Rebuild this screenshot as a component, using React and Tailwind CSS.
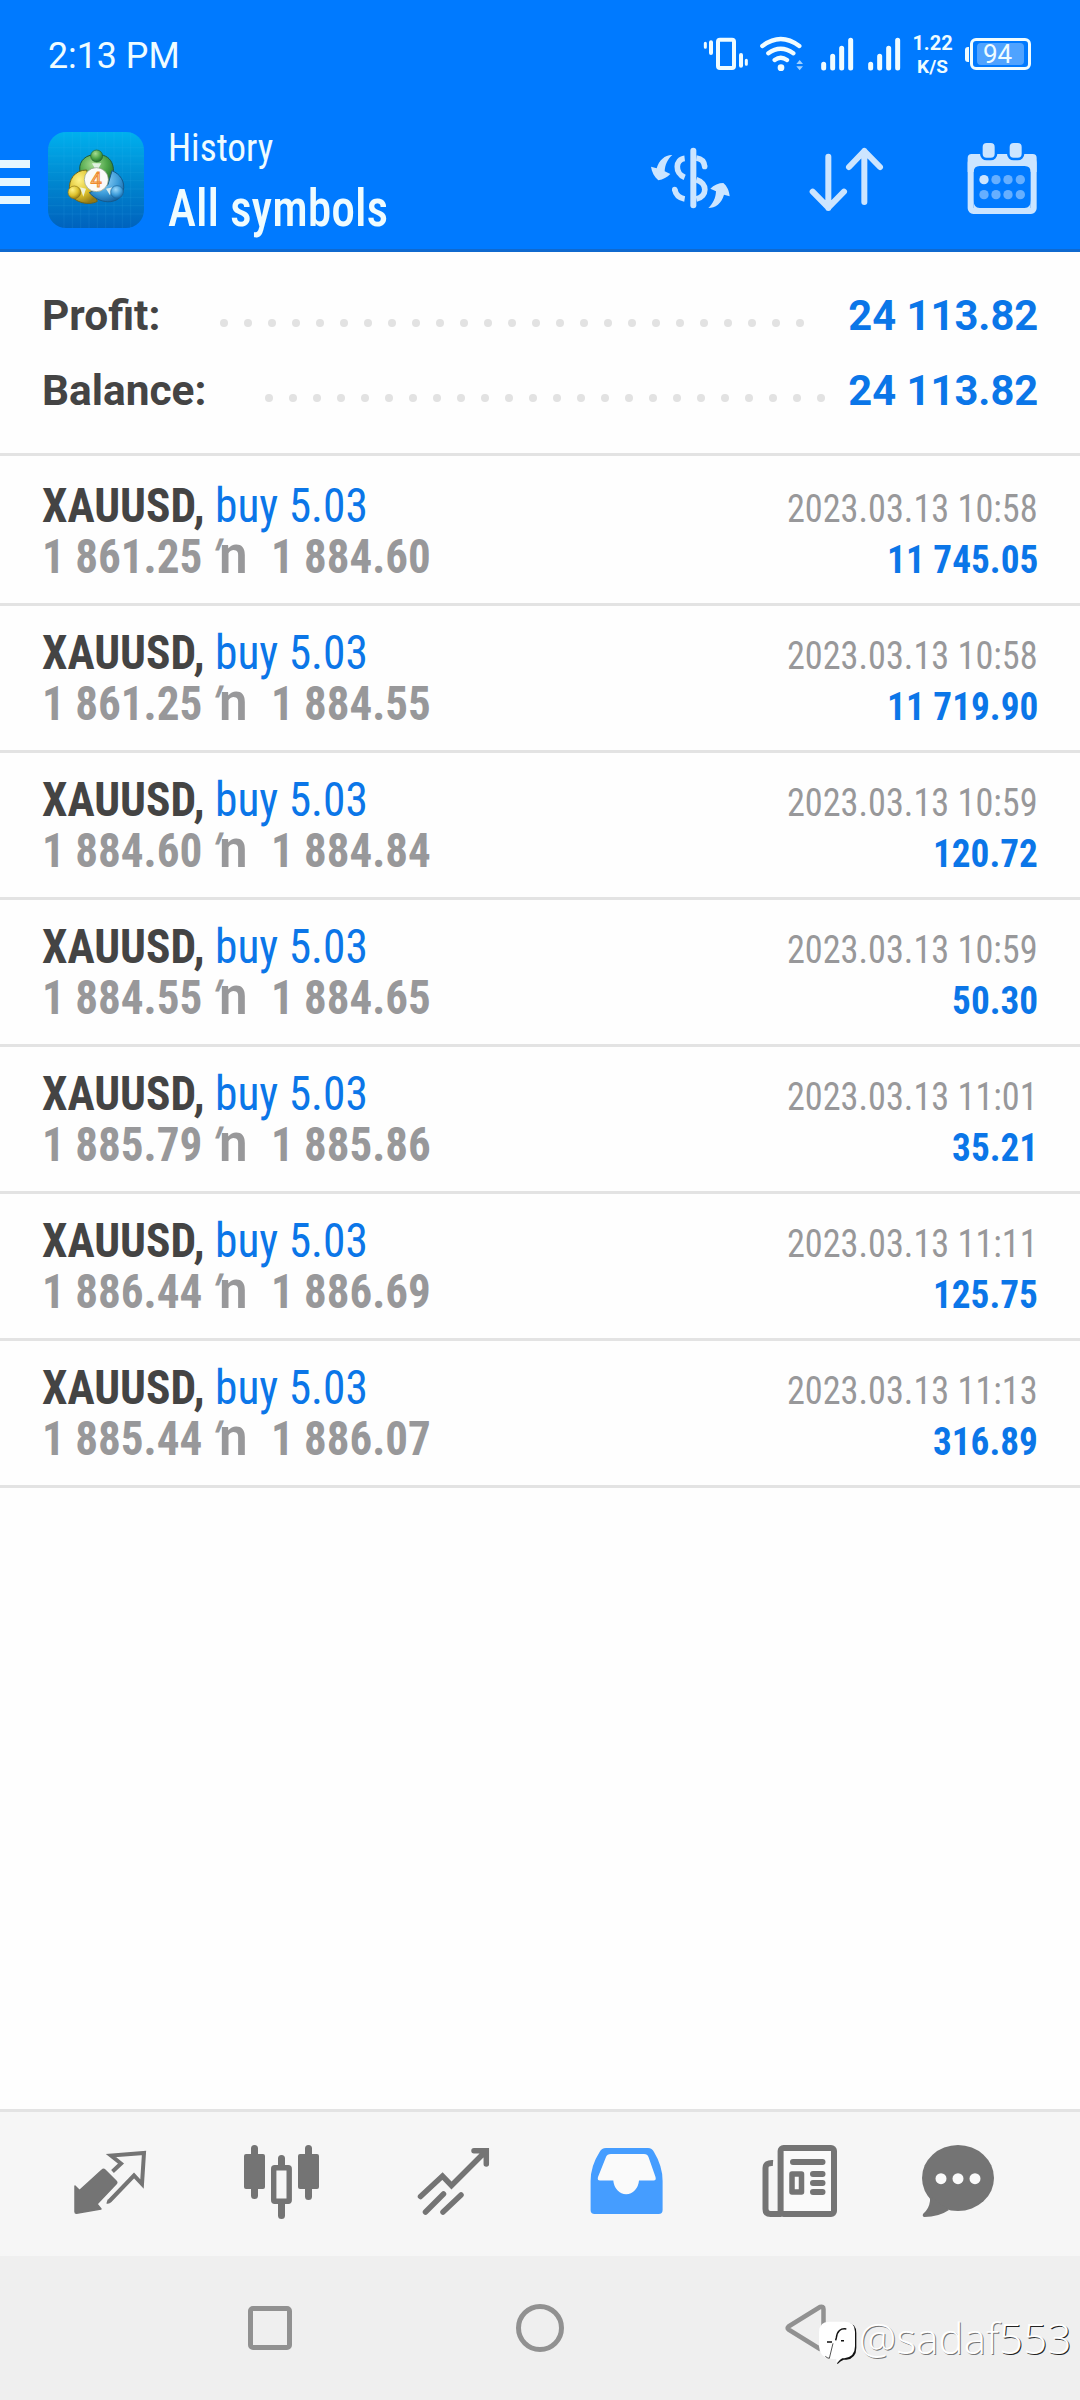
import React from 'react';

const totals = [
    { label: 'Profit:', value: '24 113.82', width: 'w-[178px]', dots: 25 },
    { label: 'Balance:', value: '24 113.82', width: 'w-[223px]', dots: 24 },
];

const deals = [
    { open: '1 861.25', close: '1 884.60', time: '2023.03.13 10:58', profit: '11 745.05' },
    { open: '1 861.25', close: '1 884.55', time: '2023.03.13 10:58', profit: '11 719.90' },
    { open: '1 884.60', close: '1 884.84', time: '2023.03.13 10:59', profit: '120.72' },
    { open: '1 884.55', close: '1 884.65', time: '2023.03.13 10:59', profit: '50.30' },
    { open: '1 885.79', close: '1 885.86', time: '2023.03.13 11:01', profit: '35.21' },
    { open: '1 886.44', close: '1 886.69', time: '2023.03.13 11:11', profit: '125.75' },
    { open: '1 885.44', close: '1 886.07', time: '2023.03.13 11:13', profit: '316.89' },
];

const condensed = "font-['Roboto_Condensed',Roboto,sans-serif] [font-stretch:75%]";

function Signal() {
    return (
        <svg width="34" height="34" viewBox="0 0 102 102" fill="none" stroke="#f0fcff" strokeWidth="15" strokeLinecap="round">
            <path d="M8 82v11M35 58v35M62 34v59M89 10v83" />
        </svg>
    );
}

function StatusBar() {
    return (
        <div className="flex h-[112px] items-center pl-[48px] pr-[49px] text-[#effcff]">
            <span className="origin-left scale-x-[.98] text-[36.5px] leading-none">2:13 PM</span>
            <div className="-mt-1 ml-auto flex items-center">
                {/* vibrate */}
                <svg width="46" height="34" viewBox="249 111 138 102" fill="none" stroke="#f0fcff" strokeLinecap="round">
                    <rect x="294" y="119" width="48" height="85" rx="6" strokeWidth="12" />
                    <path d="M273 127v32M363 165v32" strokeWidth="12" />
                    <path d="M256 130v12M379 181v12" strokeWidth="9" />
                </svg>
                <svg className="ml-[10px]" width="45" height="36" viewBox="419 105 135 108" fill="none" stroke="#f0fcff" strokeWidth="13" strokeLinecap="round">
                    <path d="M429 135Q484 93 540 135M447 157Q484 130 522 157M466 177Q484 164 503 177" />
                    <circle cx="485" cy="200" r="10" fill="#f0fcff" stroke="none" />
                    <path d="M531 189l10-12 10 12zM531 196l10 12 10-12z" fill="#9fd0ff" stroke="none" />
                </svg>
                <div className="ml-[17px] flex gap-[13px]">
                    <Signal />
                    <Signal />
                </div>
                <div className="ml-[10px] mr-px flex w-[41px] flex-col items-center pt-0.5 text-[20px] font-bold leading-[23px]">
                    <span>1.22</span>
                    <span className="text-[19px]">K/S</span>
                </div>
                <div className="ml-[11px] flex items-center">
                    <span className="mr-px h-[15px] w-1 rounded-l-[3px] bg-[#f0fcff]" />
                    <div className="flex h-8 w-[61px] items-center justify-center rounded-md border-[3px] border-[#f0fcff]">
                        <div className="flex h-[22px] w-[47px] items-center justify-center rounded-sm bg-[#4fa3ff] pr-[6px] text-[26px] leading-none">
                            94
                        </div>
                    </div>
                </div>
            </div>
        </div>
    );
}

function Logo() {
    return (
        <svg width="96" height="96" viewBox="24 36 288 288">
            <defs>
                <linearGradient id="tile" x1="0" y1="0" x2="0" y2="1">
                    <stop offset="0" stopColor="#00b0ee" />
                    <stop offset="0.5" stopColor="#0088d0" />
                    <stop offset="1" stopColor="#0062bd" />
                </linearGradient>
                <radialGradient id="green" cx="0.4" cy="0.3" r="0.7">
                    <stop offset="0" stopColor="#a6dc92" />
                    <stop offset="0.6" stopColor="#4da548" />
                    <stop offset="1" stopColor="#256f2d" />
                </radialGradient>
                <radialGradient id="yellow" cx="0.35" cy="0.3" r="0.75">
                    <stop offset="0" stopColor="#fff386" />
                    <stop offset="0.6" stopColor="#dcc02c" />
                    <stop offset="1" stopColor="#927915" />
                </radialGradient>
                <radialGradient id="blue" cx="0.4" cy="0.3" r="0.75">
                    <stop offset="0" stopColor="#9bd8fa" />
                    <stop offset="0.6" stopColor="#3b9bd9" />
                    <stop offset="1" stopColor="#14609f" />
                </radialGradient>
            </defs>
            <rect x="24" y="36" width="288" height="288" rx="54" fill="url(#tile)" />
            <path
                d="M24 83h288M24 108h288M24 132h288M24 157h288M24 182h288M24 207h288M24 232h288M24 257h288M24 282h288M72 36v288M97 36v288M122 36v288M147 36v288M172 36v288M197 36v288M222 36v288M247 36v288M272 36v288"
                stroke="#4fc6f5"
                strokeOpacity="0.16"
                strokeWidth="2"
            />
            <path d="M150 106C122 114 112 142 124 166L208 196C226 168 228 118 190 106Z" fill="url(#green)" stroke="#1c5a40" strokeWidth="3" />
            <path d="M140 150C104 150 84 180 89 212C92 244 142 260 172 244L150 190Z" fill="url(#yellow)" stroke="#6d6418" strokeWidth="3" />
            <path d="M216 152C240 162 256 184 250 212C244 250 186 260 148 218L204 194Z" fill="url(#blue)" stroke="#155a8c" strokeWidth="3" />
            <path d="M156 130h28l-8 14h-12zM120 202l18 4-8 24zM218 202l-20 4 12 20z" fill="#eef8f2" fillOpacity="0.85" />
            <circle cx="170" cy="108" r="18" fill="url(#green)" stroke="#25662f" strokeWidth="2" />
            <circle cx="103" cy="217" r="19" fill="url(#yellow)" stroke="#8c7415" strokeWidth="2" />
            <circle cx="231" cy="216" r="19" fill="url(#blue)" stroke="#1b659c" strokeWidth="2" />
            <circle cx="169" cy="179" r="36" fill="#fbfaf8" stroke="#8b9c88" strokeWidth="2" />
            <text x="168" y="200" textAnchor="middle" fontSize="60" fontFamily="Roboto, sans-serif" fontWeight="400" fill="#ffd9ae" stroke="#ee8a2d" strokeWidth="3">
                4
            </text>
        </svg>
    );
}

function Header() {
    return (
        <header className="h-[252px] border-b-[3px] border-[#0f69cf] bg-[#007aff]">
            <StatusBar />
            <div className="flex h-[137px] items-start">
                <div className="mt-12 flex w-[30px] flex-col gap-[10px]">
                    <span className="h-2 bg-[#e6f7ff]" />
                    <span className="h-2 bg-[#e6f7ff]" />
                    <span className="h-2 bg-[#e6f7ff]" />
                </div>
                <div className="ml-[18px] mt-5">
                    <Logo />
                </div>
                <div className={`${condensed} ml-6 mt-3 flex flex-col whitespace-nowrap text-[#effcff]`}>
                    <span className="origin-left scale-x-[.955] text-[39px] font-[450] leading-[48px]">History</span>
                    <span className="origin-left scale-x-[.915] text-[52px] font-[460] leading-[74px]">All symbols</span>
                </div>
                <div className="ml-auto mr-[41px] mt-[30px] flex">
                    {/* currency */}
                    <svg width="82" height="74" viewBox="86 426 246 222" fill="none" stroke="#cce5ff" strokeWidth="17">
                        <path d="M219 452v164" strokeLinecap="round" strokeWidth="18" />
                        <path d="M193 475C165 478 162 520 193 532M163 568C166 584 174 594 193 597M228 474C244 476 252 486 253 500" />
                        <circle cx="253" cy="500" r="8" fill="#cce5ff" stroke="none" />
                        <circle cx="163" cy="568" r="8" fill="#cce5ff" stroke="none" />
                        <path d="M228 539C262 549 262 589 228 597" />
                        <path d="M156 465C135 464 116 480 109 505L92 500C94 516 102 530 114 541C128 538 141 532 150 522L133 514C134 494 142 477 156 465Z" fill="#cce5ff" stroke="none" />
                        <path d="M264 624C285 624 304 610 311 584L328 589C327 573 320 558 309 549C296 549 280 555 270 566L287 574C286 594 279 610 264 624Z" fill="#cce5ff" stroke="none" />
                    </svg>
                    <svg className="ml-[77px]" width="77" height="74" viewBox="563 426 231 222" fill="none" stroke="#cce5ff" strokeWidth="18" strokeLinecap="round" strokeLinejoin="round">
                        <path d="M624 470v154M577 575l47 48 47-48M732 606V453M686 501l46-48 47 48" />
                    </svg>
                    <svg className="ml-[81px]" width="73" height="74" viewBox="1039 426 219 222">
                        <rect x="1053" y="480" width="189" height="153" rx="8" fill="none" stroke="#cce5ff" strokeWidth="18" />
                        <path d="M1056 462h183a12 12 0 0 1 12 12v42h-18q0-18-18-18h-135q-18 0-18 18h-18v-42a12 12 0 0 1 12-12z" fill="#cce5ff" />
                        <path d="M1062 600q0 24 18 24h-18zM1233 600q0 24-18 24h18z" fill="#cce5ff" />
                        <rect x="1085" y="425" width="44" height="52" rx="16" fill="#cce5ff" stroke="#007aff" strokeWidth="8" />
                        <rect x="1166" y="425" width="44" height="52" rx="16" fill="#cce5ff" stroke="#007aff" strokeWidth="8" />
                        <g fill="#66afff">
                            <circle cx="1093" cy="539" r="14" fill="#cce5ff" />
                            <circle cx="1129" cy="539" r="14" />
                            <circle cx="1165" cy="539" r="14" />
                            <circle cx="1202" cy="539" r="14" />
                            <circle cx="1093" cy="584" r="14" />
                            <circle cx="1129" cy="584" r="14" />
                            <circle cx="1165" cy="584" r="14" />
                            <circle cx="1202" cy="584" r="14" />
                        </g>
                    </svg>
                </div>
            </div>
        </header>
    );
}

function Totals() {
    return (
        <section className="h-[204px] border-b-[3px] border-[#e3e3e3] pl-[42px] pr-[42px] pt-[26px]">
            {totals.map((t) => (
                <div key={t.label} className="flex h-[75px] items-center text-[42px] font-bold">
                    <span className={`${t.width} origin-left scale-x-[1.01] text-[#444]`}>{t.label}</span>
                    <div className="mt-[15px] flex gap-4">
                        {Array.from({ length: t.dots }, (_, i) => (
                            <span key={i} className="size-2 rounded-full bg-[#e2e2e2]" />
                        ))}
                    </div>
                    <span className="ml-auto origin-right scale-x-[.993] text-[#0b76e8]">{t.value}</span>
                </div>
            ))}
        </section>
    );
}

function Deal({ open, close, time, profit }) {
    return (
        <li className={`${condensed} flex h-[147px] justify-between whitespace-nowrap border-b-[3px] border-[#e3e3e3] px-[42px]`}>
            <div className="flex flex-col pt-[21px] text-[48px] leading-[51px]">
                <div className="origin-left scale-x-[.946]">
                    <span className="font-bold text-[#444]">XAUUSD,</span> <span className="font-[450] text-[#0b76e8]">buy 5.03</span>
                </div>
                <div className="-mt-0.5 flex h-[51px] items-baseline font-bold text-[#98989a]">
                    <span className="w-[169px] origin-left scale-x-[.94]">{open}</span>
                    <span className="flex w-[60px] items-baseline font-[Roboto,sans-serif] text-[54px] font-semibold leading-[51px] [font-stretch:100%]">
                        <span className="w-2 -skew-x-[20deg] text-[46px]">′</span>
                        <span className="origin-left scale-x-[.95]">n</span>
                    </span>
                    <span className="origin-left scale-x-[.937]">{close}</span>
                </div>
            </div>
            <div className="flex flex-col items-end pt-[25px] text-[39px] leading-[51px]">
                <span className="origin-right scale-x-[.93] text-[#98989a]">{time}</span>
                <span className="origin-right scale-x-[.955] font-bold text-[#0b76e8]">{profit}</span>
            </div>
        </li>
    );
}

function TabBar() {
    return (
        <nav className="flex h-[147px] gap-[94px] border-t-[3px] border-[#e3e3e3] bg-[#f6f6f6] pl-[72px] pt-[28px]">
            {/* quotes */}
            <svg width="78" height="80" viewBox="72 50 78 80" fill="none">
                <path d="M75 96l4.5 4.5L102 80q1.500-1.500 3 0L116 91q1.500 1.500 0 3L97 114l4 5-24.500 4.200q-1.500 0-1.500-1.500z" fill="#747474" stroke="#747474" strokeWidth="1.500" strokeLinejoin="round" />
                <path d="M112.500 81.500l8.500-8-10-8 33-2.500-2 31-8-8.500-24 25q-1.500 1.500-3 1" stroke="#747474" strokeWidth="4" />
            </svg>
            {/* chart */}
            <svg width="78" height="80" viewBox="244 50 78 80" fill="none" stroke="#747474" strokeLinecap="round">
                <rect x="244" y="64" width="21" height="35" rx="2" fill="#747474" stroke="none" />
                <rect x="298" y="64" width="21" height="35" rx="2" fill="#747474" stroke="none" />
                <rect x="273.700" y="77.700" width="15.500" height="33.500" rx="1" strokeWidth="5.400" />
                <path d="M254.500 58.500v47M308.500 58.500v48M281.500 68.500v7M281.500 114v11.500" strokeWidth="7" />
            </svg>
            {/* trade */}
            <svg width="78" height="80" viewBox="416 50 78 80" fill="none" stroke="#747474" strokeWidth="5.500" strokeLinecap="round">
                <path d="M420.500 106.500l22-20.500 9 9.500 34.500-34.500M474 60.800h12.300V74M425.500 122l18-18M443 122l18-17" />
            </svg>
            {/* history */}
            <svg width="78" height="80" viewBox="588 50 78 80">
                <path
                    fill="#459dff"
                    d="M606 58H648q4 0 6 4 8.600 14 8.600 29V120q0 4-4 4H594.600q-4 0-4-4V91q0-15 9-29 2-4 6.400-4z"
                />
                <path d="M611 64q-4 0-5 3l-8 20q-1 3.500 2 3.500h13.300a12.900 15 0 0 0 25.700 0H653.500q3 0 2-3.500l-7-20q-1-3-4.500-3z" fill="#fafafa" />
            </svg>
            {/* news */}
            <svg width="78" height="80" viewBox="760 50 78 80" fill="none" stroke="#747474" strokeWidth="6">
                <rect x="780.600" y="58" width="53.400" height="66" rx="3" fill="#fafafa" />
                <path d="M773 73q-7.500-.5-7.500 5v41q0 5 5 5h11" />
                <path d="M793 72h29.500M813 84h9.500M813 93h9.500M813 102h9.500" strokeLinecap="round" />
                <rect x="792" y="84" width="9.500" height="18" strokeWidth="5.500" strokeLinejoin="round" />
            </svg>
            {/* messages */}
            <svg className="-ml-[14px]" width="78" height="80" viewBox="918 50 78 80" fill="#747474">
                <ellipse cx="958" cy="88" rx="36" ry="33" />
                <path d="M926 103q4.500 3.500 4 8-1 8-7 13-1 2.500 1.500 3 14 0 24.500-7z" />
                <g fill="#fafafa">
                    <circle cx="941" cy="88.700" r="5.500" />
                    <circle cx="958" cy="88.700" r="5.500" />
                    <circle cx="975" cy="88.700" r="5.500" />
                </g>
            </svg>
        </nav>
    );
}

function SystemBar() {
    return (
        <div className="relative flex h-36 items-center bg-[#efefef] px-[135px]">
            <div className="flex w-[270px] justify-center">
                <span className="size-11 rounded-[5px] border-[5px] border-[#919191]" />
            </div>
            <div className="flex w-[270px] justify-center">
                <span className="size-12 rounded-full border-[5px] border-[#919191]" />
            </div>
            <div className="flex w-[270px] justify-center">
                <svg width="54" height="54" viewBox="0 0 54 54" fill="none" stroke="#919191" strokeWidth="4.500" strokeLinejoin="round">
                    <path d="M5.500 25.500L37 6q3.500-1 3.500 2v38q0 3.500-3.500 2L5.500 28.500q-1.500-1.500 0-3z" />
                </svg>
            </div>
            {/* user tag floating over the bar */}
            <div className="absolute left-[818px] top-[64px] flex items-start">
                <svg width="39" height="46" viewBox="39 60 117 138">
                    <path d="M76 69h50q28 0 28 30v44q0 32-30 36h-8q-10 4-18 13l-2-2 14-16z" fill="#111" />
                    <path d="M72 65h48q30 0 30 30v44q0 32-32 36h-6q-10 4-18 13v-12q-10 2-22-1-28-4-30-36v-42q0-32 30-32z" fill="#fff" />
                    <path d="M124 87q-26-4-30 26l-2 8M66 126h15M108 122h9" fill="none" stroke="#111" strokeWidth="4.500" />
                    <path d="M84 130l-11 45q-7-1-12-6" fill="none" stroke="#333" strokeWidth="2.500" />
                </svg>
                <span className="ml-[2px] mt-[-3px] whitespace-nowrap font-['Open_Sans',sans-serif] text-[42px] font-light leading-none tracking-[.2px] text-white [text-shadow:1px_1px_0.5px_#777]">
                    @sadaf<span className="[text-shadow:1px_1px_0px_#222]">553</span>
                </span>
            </div>
        </div>
    );
}

export default function App() {
    return (
        <div className="flex h-[2400px] w-[1080px] flex-col overflow-hidden bg-[#fefefe] font-[Roboto,sans-serif]">
            <Header />
            <Totals />
            <ul className="flex-1 pt-[3px]">
                {deals.map((deal, i) => (
                    <Deal key={i} {...deal} />
                ))}
            </ul>
            <TabBar />
            <SystemBar />
        </div>
    );
}
